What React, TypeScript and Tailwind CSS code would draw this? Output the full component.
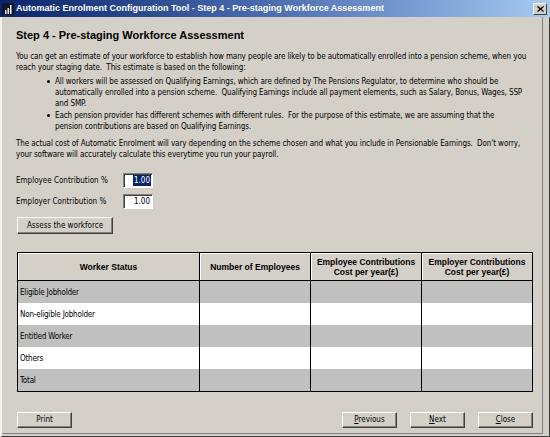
import React from "react";

function Btn({ children, className = "" }: { children: React.ReactNode; className?: string }) {
  return (
    <div
      className={
        "flex items-center justify-center bg-[#d4d0c8] border border-t-white border-l-white border-r-[#404040] border-b-[#404040] shadow-[inset_-1px_-1px_0_#808080] text-[8px] leading-none whitespace-nowrap " +
        className
      }
    >
      {children}
    </div>
  );
}

const rows = [
  { label: "Eligible Jobholder", bg: "bg-[#c0c0c0]" },
  { label: "Non-eligible Jobholder", bg: "bg-white" },
  { label: "Entitled Worker", bg: "bg-[#c0c0c0]" },
  { label: "Others", bg: "bg-white" },
  { label: "Total", bg: "bg-[#c0c0c0]" },
];

export default function App() {
  return (
    <div className="w-[550px] h-[437px] bg-[#d4d0c8] flex flex-col overflow-hidden font-['DejaVu_Sans_Condensed','Liberation_Sans',Arial,sans-serif] text-black">
      {/* Title bar */}
      <div className="h-[17px] shrink-0 flex items-center bg-linear-to-r from-[#0a246a] via-[#4d6fb2] to-[#a6caf0] pl-[2px] pr-[3px]">
        <svg width="12" height="12" viewBox="0 0 12 12" className="shrink-0">
          <rect x="0" y="0" width="12" height="12" fill="#10142c" />
          <rect x="3" y="7" width="1.5" height="4" fill="#e8e8e8" />
          <rect x="5.5" y="5" width="1.5" height="6" fill="#f0f0f0" />
          <rect x="8" y="2" width="1.5" height="9" fill="#ffffff" />
        </svg>
        <span className="ml-[2px] text-white font-bold text-[9px] leading-none whitespace-nowrap font-['Liberation_Sans',Arial,sans-serif]">
          Automatic Enrolment Configuration Tool - Step 4 - Pre-staging Workforce Assessment
        </span>
        <div className="flex-1" />
        <div className="w-[14px] h-[12px] shrink-0 flex items-center justify-center bg-[#d4d0c8] border border-t-white border-l-white border-r-[#404040] border-b-[#404040]">
          <svg width="7" height="6" viewBox="0 0 7 6">
            <path d="M0.5 0.5 L6.5 5.5 M6.5 0.5 L0.5 5.5" stroke="#000" strokeWidth="1.4" />
          </svg>
        </div>
      </div>

      {/* Body */}
      <div className="flex-1 min-w-0 flex border-l-2 border-l-[#f2f1ec] border-r border-r-[#404040] border-b border-b-[#404040]">
        <div className="flex-1 min-w-0 overflow-hidden flex flex-col pl-[14px] pr-[9px] pb-[4px] mr-[6px] mb-[2px] border-r border-b border-[#808080] text-[8px] leading-[11px]">
          <div className="mt-[12px] font-bold text-[11px] leading-[13px] whitespace-nowrap font-['Liberation_Sans',Arial,sans-serif]">
            Step 4 - Pre-staging Workforce Assessment
          </div>

          <div className="mt-[9px] whitespace-nowrap tracking-[-0.1px]">
            <div>You can get an estimate of your workforce to establish how many people are likely to be automatically enrolled into a pension scheme, when you</div>
            <div>reach your staging date.&nbsp; This estimate is based on the following:</div>
          </div>

          <div className="mt-[3px] flex flex-col gap-[1px] whitespace-nowrap tracking-[-0.1px]">
            <div className="flex">
              <div className="w-[39px] shrink-0 flex justify-end pr-[5px] pt-[4px]">
                <div className="w-[3px] h-[3px] bg-black rounded-full" />
              </div>
              <div>
                <div>All workers will be assessed on Qualifying Earnings, which are defined by The Pensions Regulator, to determine who should be</div>
                <div>automatically enrolled into a pension scheme.&nbsp; Qualifying Earnings include all payment elements, such as Salary, Bonus, Wages, SSP</div>
                <div>and SMP.</div>
              </div>
            </div>
            <div className="flex">
              <div className="w-[39px] shrink-0 flex justify-end pr-[5px] pt-[4px]">
                <div className="w-[3px] h-[3px] bg-black rounded-full" />
              </div>
              <div>
                <div>Each pension provider has different schemes with different rules.&nbsp; For the purpose of this estimate, we are assuming that the</div>
                <div>pension contributions are based on Qualifying Earnings.</div>
              </div>
            </div>
          </div>

          <div className="mt-[6px] whitespace-nowrap tracking-[-0.1px]">
            <div>The actual cost of Automatic Enrolment will vary depending on the scheme chosen and what you include in Pensionable Earnings.&nbsp; Don't worry,</div>
            <div>your software will accurately calculate this everytime you run your payroll.</div>
          </div>

          <div className="mt-[13px] flex items-center">
            <div className="w-[107px] whitespace-nowrap">Employee Contribution %</div>
            <div className="w-[30px] h-[15px] bg-white border border-t-[#808080] border-l-[#808080] border-r-white border-b-white shadow-[inset_1px_1px_0_#404040] flex items-center justify-end pr-[1px]">
              <span className="bg-[#0a246a] text-white px-[1px] leading-[11px]">1.00</span>
            </div>
          </div>
          <div className="mt-[6px] flex items-center">
            <div className="w-[107px] whitespace-nowrap">Employer Contribution %</div>
            <div className="w-[30px] h-[15px] bg-white border border-t-[#808080] border-l-[#808080] border-r-white border-b-white shadow-[inset_1px_1px_0_#404040] flex items-center justify-end pr-[2px]">
              <span>1.00</span>
            </div>
          </div>

          <Btn className="mt-[8px] ml-px w-[96px] h-[17px]">Assess the workforce</Btn>

          {/* Table */}
          <div className="mt-[18px] ml-px w-[516px] border border-black grid grid-cols-[182px_111px_111px_110px]">
            {[
              ["Worker Status"],
              ["Number of Employees"],
              ["Employee Contributions", "Cost per year(£)"],
              ["Employer Contributions", "Cost per year(£)"],
            ].map((h, i) => (
              <div
                key={i}
                className={
                  "h-[28px] bg-[#d4d0c8] shadow-[inset_1px_1px_0_#ffffff] border-b border-black flex flex-col items-center justify-center font-bold text-[8.5px] leading-[10px] text-center whitespace-nowrap font-['Liberation_Sans',Arial,sans-serif] " +
                  (i < 3 ? "border-r border-r-black" : "")
                }
              >
                {h.map((t, j) => (
                  <div key={j}>{t}</div>
                ))}
              </div>
            ))}
            {rows.map((r) =>
              [0, 1, 2, 3].map((c) => (
                <div
                  key={r.label + c}
                  className={
                    "h-[22px] flex items-center pl-[2px] text-[8px] tracking-[-0.2px] whitespace-nowrap " +
                    r.bg +
                    (c < 3 ? " border-r border-r-black" : "")
                  }
                >
                  {c === 0 ? r.label : ""}
                </div>
              ))
            )}
          </div>

          {/* Bottom buttons */}
          <div className="mt-[20px] ml-px flex w-[516px]">
            <Btn className="w-[55px] h-[16px]">Print</Btn>
            <div className="flex-1" />
            <div className="flex gap-[13px]">
              <Btn className="w-[55px] h-[16px]">
                <span><span className="underline">P</span>revious</span>
              </Btn>
              <Btn className="w-[55px] h-[16px]">
                <span><span className="underline">N</span>ext</span>
              </Btn>
              <Btn className="w-[55px] h-[16px]">
                <span><span className="underline">C</span>lose</span>
              </Btn>
            </div>
          </div>
        </div>
      </div>
    </div>
  );
}
